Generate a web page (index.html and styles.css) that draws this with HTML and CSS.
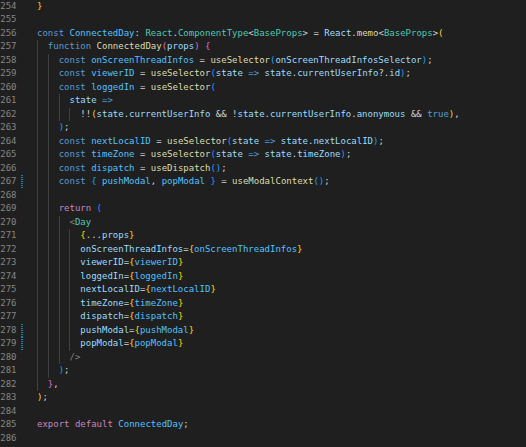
FILE: index.html
```html
<!DOCTYPE html>
<html lang="en">
<head>
<meta charset="utf-8">
<title>ConnectedDay.js</title>
<link rel="stylesheet" href="styles.css">
</head>
<body>
<div class="editor">
  <div class="line"><span class="num">254</span><span class="mk"></span><span class="code"><span class="b1">}</span></span></div>
  <div class="line"><span class="num">255</span><span class="mk"></span><span class="code"></span></div>
  <div class="line"><span class="num">256</span><span class="mk"></span><span class="code"><span class="k">const</span> <span class="n">ConnectedDay</span>: <span class="t">React</span>.<span class="t">ComponentType</span>&lt;<span class="t">BaseProps</span>&gt; = <span class="v">React</span>.<span class="f">memo</span>&lt;<span class="t">BaseProps</span>&gt;<span class="b1">(</span></span></div>
  <div class="line"><span class="num">257</span><span class="mk"></span><span class="code"><span class="ig"></span><span class="k">function</span> <span class="f">ConnectedDay</span><span class="b2">(</span><span class="v">props</span><span class="b2">)</span> <span class="b2">{</span></span></div>
  <div class="line"><span class="num">258</span><span class="mk"></span><span class="code"><span class="ig"></span><span class="ig"></span><span class="k">const</span> <span class="n">onScreenThreadInfos</span> = <span class="f">useSelector</span><span class="b3">(</span><span class="v">onScreenThreadInfosSelector</span><span class="b3">)</span>;</span></div>
  <div class="line"><span class="num">259</span><span class="mk"></span><span class="code"><span class="ig"></span><span class="ig"></span><span class="k">const</span> <span class="n">viewerID</span> = <span class="f">useSelector</span><span class="b3">(</span><span class="v">state</span> <span class="k">=&gt;</span> <span class="v">state</span>.<span class="v">currentUserInfo</span>?.<span class="v">id</span><span class="b3">)</span>;</span></div>
  <div class="line"><span class="num">260</span><span class="mk"></span><span class="code"><span class="ig"></span><span class="ig"></span><span class="k">const</span> <span class="n">loggedIn</span> = <span class="f">useSelector</span><span class="b3">(</span></span></div>
  <div class="line"><span class="num">261</span><span class="mk"></span><span class="code"><span class="ig"></span><span class="ig"></span><span class="ig"></span><span class="v">state</span> <span class="k">=&gt;</span></span></div>
  <div class="line"><span class="num">262</span><span class="mk"></span><span class="code"><span class="ig"></span><span class="ig"></span><span class="ig"></span><span class="ig"></span>!!<span class="b1">(</span><span class="v">state</span>.<span class="v">currentUserInfo</span> &amp;&amp; !<span class="v">state</span>.<span class="v">currentUserInfo</span>.<span class="v">anonymous</span> &amp;&amp; <span class="k">true</span><span class="b1">)</span>,</span></div>
  <div class="line"><span class="num">263</span><span class="mk"></span><span class="code"><span class="ig"></span><span class="ig"></span><span class="b3">)</span>;</span></div>
  <div class="line"><span class="num">264</span><span class="mk"></span><span class="code"><span class="ig"></span><span class="ig"></span><span class="k">const</span> <span class="n">nextLocalID</span> = <span class="f">useSelector</span><span class="b3">(</span><span class="v">state</span> <span class="k">=&gt;</span> <span class="v">state</span>.<span class="v">nextLocalID</span><span class="b3">)</span>;</span></div>
  <div class="line"><span class="num">265</span><span class="mk"></span><span class="code"><span class="ig"></span><span class="ig"></span><span class="k">const</span> <span class="n">timeZone</span> = <span class="f">useSelector</span><span class="b3">(</span><span class="v">state</span> <span class="k">=&gt;</span> <span class="v">state</span>.<span class="v">timeZone</span><span class="b3">)</span>;</span></div>
  <div class="line"><span class="num">266</span><span class="mk"></span><span class="code"><span class="ig"></span><span class="ig"></span><span class="k">const</span> <span class="n">dispatch</span> = <span class="f">useDispatch</span><span class="b3">()</span>;</span></div>
  <div class="line"><span class="num">267</span><span class="mk mod"></span><span class="code"><span class="ig"></span><span class="ig"></span><span class="k">const</span> <span class="b3">{</span> <span class="n">pushModal</span>, <span class="n">popModal</span> <span class="b3">}</span> = <span class="f">useModalContext</span><span class="b3">()</span>;</span></div>
  <div class="line"><span class="num">268</span><span class="mk"></span><span class="code"><span class="ig"></span><span class="ig"></span></span></div>
  <div class="line"><span class="num">269</span><span class="mk"></span><span class="code"><span class="ig"></span><span class="ig"></span><span class="c">return</span> <span class="b3">(</span></span></div>
  <div class="line"><span class="num">270</span><span class="mk"></span><span class="code"><span class="ig"></span><span class="ig"></span><span class="ig"></span><span class="g">&lt;</span><span class="t">Day</span></span></div>
  <div class="line"><span class="num">271</span><span class="mk"></span><span class="code"><span class="ig"></span><span class="ig"></span><span class="ig"></span><span class="ig"></span><span class="b1">{</span>...<span class="v">props</span><span class="b1">}</span></span></div>
  <div class="line"><span class="num">272</span><span class="mk"></span><span class="code"><span class="ig"></span><span class="ig"></span><span class="ig"></span><span class="ig"></span><span class="v">onScreenThreadInfos</span>=<span class="b1">{</span><span class="n">onScreenThreadInfos</span><span class="b1">}</span></span></div>
  <div class="line"><span class="num">273</span><span class="mk"></span><span class="code"><span class="ig"></span><span class="ig"></span><span class="ig"></span><span class="ig"></span><span class="v">viewerID</span>=<span class="b1">{</span><span class="n">viewerID</span><span class="b1">}</span></span></div>
  <div class="line"><span class="num">274</span><span class="mk"></span><span class="code"><span class="ig"></span><span class="ig"></span><span class="ig"></span><span class="ig"></span><span class="v">loggedIn</span>=<span class="b1">{</span><span class="n">loggedIn</span><span class="b1">}</span></span></div>
  <div class="line"><span class="num">275</span><span class="mk"></span><span class="code"><span class="ig"></span><span class="ig"></span><span class="ig"></span><span class="ig"></span><span class="v">nextLocalID</span>=<span class="b1">{</span><span class="n">nextLocalID</span><span class="b1">}</span></span></div>
  <div class="line"><span class="num">276</span><span class="mk"></span><span class="code"><span class="ig"></span><span class="ig"></span><span class="ig"></span><span class="ig"></span><span class="v">timeZone</span>=<span class="b1">{</span><span class="n">timeZone</span><span class="b1">}</span></span></div>
  <div class="line"><span class="num">277</span><span class="mk"></span><span class="code"><span class="ig"></span><span class="ig"></span><span class="ig"></span><span class="ig"></span><span class="v">dispatch</span>=<span class="b1">{</span><span class="n">dispatch</span><span class="b1">}</span></span></div>
  <div class="line"><span class="num">278</span><span class="mk mod"></span><span class="code"><span class="ig"></span><span class="ig"></span><span class="ig"></span><span class="ig"></span><span class="v">pushModal</span>=<span class="b1">{</span><span class="n">pushModal</span><span class="b1">}</span></span></div>
  <div class="line"><span class="num">279</span><span class="mk mod"></span><span class="code"><span class="ig"></span><span class="ig"></span><span class="ig"></span><span class="ig"></span><span class="v">popModal</span>=<span class="b1">{</span><span class="n">popModal</span><span class="b1">}</span></span></div>
  <div class="line"><span class="num">280</span><span class="mk"></span><span class="code"><span class="ig"></span><span class="ig"></span><span class="ig"></span><span class="g">/&gt;</span></span></div>
  <div class="line"><span class="num">281</span><span class="mk"></span><span class="code"><span class="ig"></span><span class="ig"></span><span class="b3">)</span>;</span></div>
  <div class="line"><span class="num">282</span><span class="mk"></span><span class="code"><span class="ig"></span><span class="b2">}</span>,</span></div>
  <div class="line"><span class="num">283</span><span class="mk"></span><span class="code"><span class="b1">)</span>;</span></div>
  <div class="line"><span class="num">284</span><span class="mk"></span><span class="code"></span></div>
  <div class="line"><span class="num">285</span><span class="mk"></span><span class="code"><span class="c">export</span> <span class="c">default</span> <span class="n">ConnectedDay</span>;</span></div>
  <div class="line"><span class="num">286</span><span class="mk"></span><span class="code"></span></div>
</div>
</body>
</html>
```
FILE: styles.css
```css
html, body {
  margin: 0;
  padding: 0;
  background: #1f1f1f;
  height: 100%;
  overflow: hidden;
}

.editor {
  margin-top: -0.5px;
  font-family: "DejaVu Sans Mono", "Liberation Mono", monospace;
  font-size: 9px;
  line-height: 13.5px;
  color: #d4d4d4;
}

.line {
  display: grid;
  grid-template-columns: 16.5px 4px 2.5px 14px 1fr;
  height: 13.5px;
  white-space: pre;
}

.num {
  grid-column: 1;
  text-align: right;
  color: #858585;
}

.mk {
  grid-column: 3;
}

.mk.mod {
  background: repeating-linear-gradient(180deg, #1b81a8 0 1px, #1f1f1f 1px 2px);
}

.code {
  grid-column: 5;
}

.ig {
  display: inline-block;
  width: 2ch;
  height: 13.5px;
  vertical-align: top;
  box-shadow: inset 1px 0 0 #404040;
}

.k { color: #569cd6; }
.c { color: #c586c0; }
.f { color: #dcdcaa; }
.t { color: #4ec9b0; }
.v { color: #9cdcfe; }
.n { color: #4fc1ff; }
.g { color: #808080; }
.b1 { color: #ffd700; }
.b2 { color: #da70d6; }
.b3 { color: #179fff; }
```
